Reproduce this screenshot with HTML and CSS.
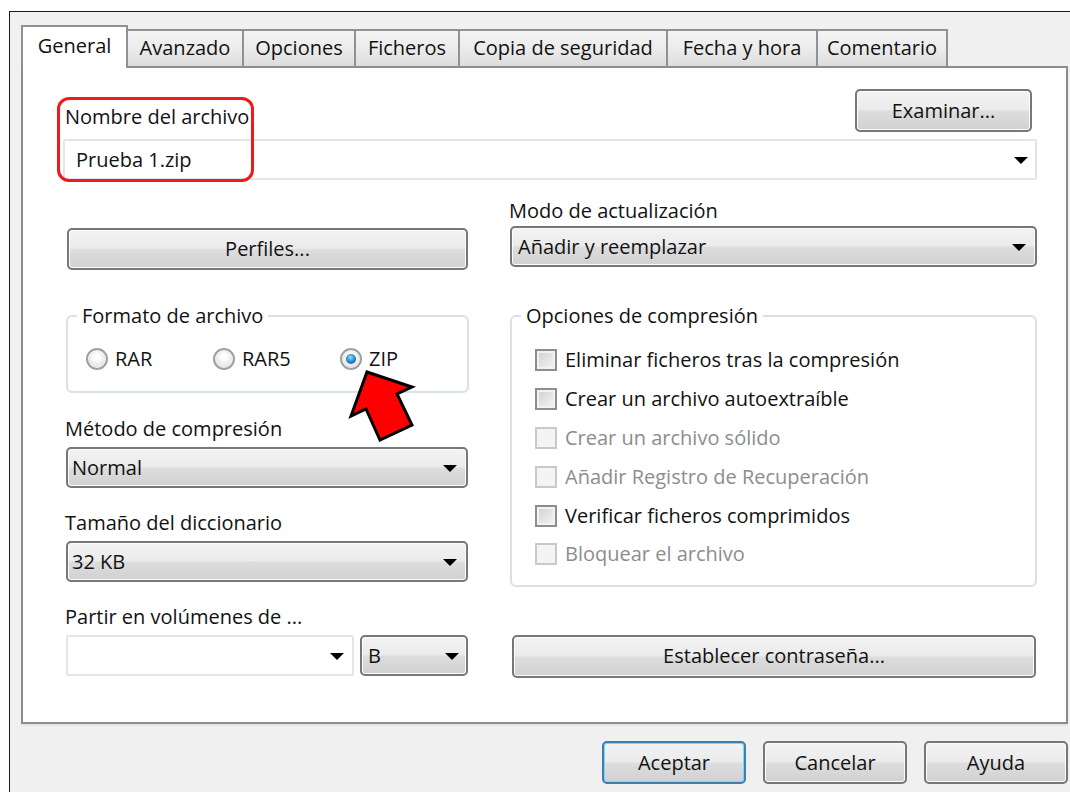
FILE: index.html
```html
<!DOCTYPE html>
<html lang="es">
<head>
<meta charset="utf-8">
<title>Nombre y parámetros del archivo</title>
<link rel="stylesheet" href="styles.css">
</head>
<body>
<div class="window">
  <div class="tabs">
    <div class="tab active">General</div>
    <div class="tab t-avanzado">Avanzado</div>
    <div class="tab t-opciones">Opciones</div>
    <div class="tab t-ficheros">Ficheros</div>
    <div class="tab t-copia">Copia de seguridad</div>
    <div class="tab t-fecha">Fecha y hora</div>
    <div class="tab t-comentario">Comentario</div>
  </div>

  <div class="panel">
    <div class="name-head">
      <span class="label name-label">Nombre del archivo</span>
      <button class="btn btn-browse">Examinar...</button>
    </div>
    <div class="combo combo-edit combo-name">
      <span class="combo-text">Prueba 1.zip</span>
      <span class="arrow"></span>
    </div>

    <div class="columns">
      <div class="col col-left">
        <button class="btn btn-wide btn-profiles">Perfiles...</button>

        <fieldset class="group group-format">
          <legend>Formato de archivo</legend>
          <div class="radios">
            <label class="radio-item"><span class="radio"></span>RAR</label>
            <label class="radio-item"><span class="radio"></span>RAR5</label>
            <label class="radio-item"><span class="radio checked"></span>ZIP</label>
          </div>
        </fieldset>

        <div class="label field-label first-field">Método de compresión</div>
        <div class="combo"><span class="combo-text">Normal</span><span class="arrow"></span></div>

        <div class="label field-label">Tamaño del diccionario</div>
        <div class="combo"><span class="combo-text">32 KB</span><span class="arrow"></span></div>

        <div class="label field-label">Partir en volúmenes de ...</div>
        <div class="split-row">
          <div class="combo combo-edit combo-size"><span class="combo-text"></span><span class="arrow"></span></div>
          <div class="combo combo-unit"><span class="combo-text">B</span><span class="arrow"></span></div>
        </div>
      </div>

      <div class="col col-right">
        <div class="label mode-label">Modo de actualización</div>
        <div class="combo combo-mode"><span class="combo-text">Añadir y reemplazar</span><span class="arrow"></span></div>

        <fieldset class="group group-options">
          <legend>Opciones de compresión</legend>
          <label class="check-row"><span class="check"></span>Eliminar ficheros tras la compresión</label>
          <label class="check-row"><span class="check"></span>Crear un archivo autoextraíble</label>
          <label class="check-row disabled"><span class="check"></span>Crear un archivo sólido</label>
          <label class="check-row disabled"><span class="check"></span>Añadir Registro de Recuperación</label>
          <label class="check-row"><span class="check"></span>Verificar ficheros comprimidos</label>
          <label class="check-row disabled"><span class="check"></span>Bloquear el archivo</label>
        </fieldset>

        <button class="btn btn-wide btn-password">Establecer contraseña...</button>
      </div>
    </div>

    <!-- callouts drawn on top of the dialog -->
    <div class="callout-box"></div>
    <svg class="callout-arrow" width="73" height="80" viewBox="0 0 73 80">
      <polygon points="22,7 67,22 52,29 67,60 35,75 21,44 6,51" fill="#ff0000" stroke="#000" stroke-width="3" stroke-linejoin="miter"/>
    </svg>
  </div>

  <div class="actions">
    <button class="btn btn-action btn-default">Aceptar</button>
    <button class="btn btn-action">Cancelar</button>
    <button class="btn btn-action">Ayuda</button>
  </div>
</div>
</body>
</html>
```

FILE: styles.css
```css
* {
  box-sizing: border-box;
}

html, body {
  margin: 0;
  padding: 0;
  background: #ffffff;
  width: 1070px;
  height: 792px;
  overflow: hidden;
}

body {
  font-family: "Open Sans", "Noto Sans", "DejaVu Sans", sans-serif;
  font-size: 20px;
  line-height: 24px;
  color: #121212;
}

/* dialog window */
.window {
  margin: 11px 0 0 9px;
  height: 781px;
  border-top: 1px solid #1a1a1a;
  border-left: 1px solid #1a1a1a;
  background: #f0f0f0;
  padding: 13px 2px 0 11px;
}

/* tab strip */
.tabs {
  display: flex;
  align-items: flex-end;
  height: 41px;
}

.tab {
  height: 37px;
  padding: 5px 0 0;
  text-align: center;
  white-space: nowrap;
  border: 2px solid #8e9197;
  border-bottom: none;
  border-left: none;
  background: linear-gradient(#f4f4f4, #ececec 50%, #dcdcdc);
}

.tab.active {
  position: relative;
  z-index: 1;
  width: 107px;
  height: 43px;
  margin-bottom: -2px;
  padding-top: 7px;
  border-left: 2px solid #8e9197;
  background: #ffffff;
}

.t-avanzado { width: 116px; }
.t-opciones { width: 112px; }
.t-ficheros { width: 104px; }
.t-copia { width: 208px; }
.t-fecha { width: 150px; }
.t-comentario { width: 130px; }

/* tab page */
.panel {
  position: relative;
  height: 658px;
  background: #ffffff;
  border: 2px solid #898c95;
  box-shadow: 0 2px 0 #e4e4e4;
  padding: 21px 29px 0 40px;
}

.label {
  display: block;
  white-space: nowrap;
}

.name-head {
  display: flex;
  justify-content: space-between;
  align-items: flex-end;
  height: 43px;
}

.name-label {
  margin: 0 0 3px 2px;
}

/* push buttons */
.btn {
  font: inherit;
  color: inherit;
  height: 43px;
  border: 2px solid #777777;
  border-radius: 5px;
  background: linear-gradient(#f3f3f3, #ebebeb 48%, #dddddd 52%, #d1d1d1);
  box-shadow: inset 0 0 0 1px #fbfbfb;
  padding: 0;
  text-align: center;
}

.btn-browse {
  width: 177px;
  margin-right: 5px;
}

.btn-wide {
  display: block;
  width: 100%;
}

.btn-profiles {
  width: 401px;
  height: 42px;
  margin: 29px 0 0 1px;
}

.btn-password {
  width: 524px;
  margin: 48px 0 0 2px;
}

/* combo boxes */
.combo {
  position: relative;
  display: flex;
  align-items: center;
  height: 41px;
  border: 2px solid #777777;
  border-radius: 5px;
  background: linear-gradient(#f3f3f3, #ebebeb 48%, #dddddd 52%, #d1d1d1);
  box-shadow: inset 0 0 0 1px #fbfbfb;
  padding: 0 9px 0 4px;
}

.combo-text {
  flex: 1;
  white-space: nowrap;
}

.arrow {
  width: 0;
  height: 0;
  border-left: 7px solid transparent;
  border-right: 7px solid transparent;
  border-top: 7px solid #000;
  margin-top: 2px;
}

.combo-edit {
  border: 2px solid #e1e6ec;
  border-radius: 2px;
  background: #ffffff;
  box-shadow: none;
}

.combo-name {
  margin-top: 7px;
  padding-left: 11px;
  padding-right: 7px;
}

/* two-column body */
.columns {
  display: grid;
  grid-template-columns: 402px 527px;
  column-gap: 42px;
  margin-top: 19px;
  margin-left: 3px;
}

.col {
  display: flex;
  flex-direction: column;
}

.mode-label {
  margin-left: -1px;
}

.combo-mode {
  margin-top: 3px;
  padding-left: 6px;
}

/* group boxes */
.group {
  margin: 0;
  border: 2px solid #d9e0e6;
  border-radius: 6px;
  min-width: 0;
}

.group legend {
  padding: 0 5px;
  line-height: 24px;
  white-space: nowrap;
}

.group-format {
  width: 403px;
  margin-top: 34px;
  padding: 19px 0 20px 18px;
}

.group-format legend {
  margin-left: -9px;
}

.radios {
  display: flex;
  height: 24px;
}

.radio-item {
  display: flex;
  align-items: center;
  gap: 7px;
  width: 129px;
}

.radio {
  position: relative;
  width: 22px;
  height: 22px;
  border-radius: 50%;
  border: 2px solid #a0a0a0;
  background: radial-gradient(circle at 50% 40%, #fdfdfd 20%, #dedede 80%);
  box-shadow: inset 0 0 0 1px #f4f4f4;
}

.radio.checked::after {
  content: "";
  position: absolute;
  left: 4px;
  top: 4px;
  width: 10px;
  height: 10px;
  border-radius: 50%;
  background: radial-gradient(circle at 45% 35%, #9fe0ff 0%, #2b8fd0 45%, #0b4f86 100%);
}

.group-options {
  margin-top: 37px;
  padding: 13px 0 11px 23px;
}

.group-options legend {
  margin-left: -14px;
}

.check-row {
  display: flex;
  align-items: center;
  gap: 8px;
  height: 38.8px;
  white-space: nowrap;
}

.check {
  flex: none;
  width: 22px;
  height: 22px;
  border: 2px solid #8d8d8d;
  background: linear-gradient(135deg, #cfcfcf, #f6f6f6);
  box-shadow: inset 0 0 0 2px #f2f2f2;
}

.check-row.disabled {
  color: #8d8d8d;
}

.check-row.disabled .check {
  border-color: #c9c9c9;
  background: #f4f4f4;
  box-shadow: none;
}

/* fields under the format group */
.field-label {
  margin-top: 23px;
  margin-left: -1px;
}

.first-field {
  margin-top: 24px;
}

.field-label + .combo,
.field-label + .split-row {
  margin-top: 6px;
}

.split-row {
  display: flex;
  gap: 6px;
}

.combo-size {
  width: 288px;
  padding-right: 8px;
}

.combo-unit {
  width: 108px;
  padding-left: 6px;
  padding-right: 7px;
}

/* red callouts */
.callout-box {
  position: absolute;
  left: 34px;
  top: 29px;
  width: 197px;
  height: 85px;
  border: 3px solid #ee1b1b;
  border-radius: 12px;
}

.callout-arrow {
  position: absolute;
  left: 322px;
  top: 297px;
}

/* dialog buttons */
.actions {
  display: flex;
  justify-content: flex-end;
  gap: 17px;
  margin-top: 17px;
}

.btn-action {
  width: 144px;
  height: 43px;
}

.btn-default {
  border-color: #3c7fb1;
  box-shadow: inset 0 0 0 1px #7fd6f7;
}
```
